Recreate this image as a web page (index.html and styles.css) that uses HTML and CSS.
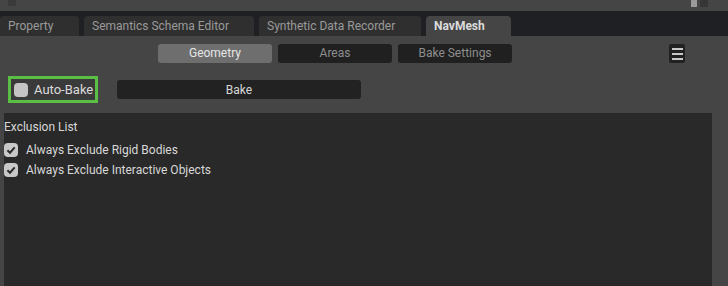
FILE: index.html
```html
<!DOCTYPE html>
<html>
<head>
    <title>NavMesh</title>
    <meta charset="utf-8">
    <link rel="stylesheet" href="styles.css">
</head>

<body>
    <div class="topbar">
        <div class="grip"></div>
        <div class="scroll">
            <div class="scroll-thumb"></div>
            <div class="scroll-track"></div>
        </div>
    </div>

    <div class="tabbar">
        <div class="tab tab-property">Property</div>
        <div class="tab tab-semantics">Semantics Schema Editor</div>
        <div class="tab tab-synthetic">Synthetic Data Recorder</div>
        <div class="tab tab-navmesh active">NavMesh</div>
    </div>

    <div class="panel">
        <div class="toolbar">
            <div class="segments">
                <div class="segment selected">Geometry</div>
                <div class="segment">Areas</div>
                <div class="segment">Bake Settings</div>
            </div>
            <div class="menu-btn">
                <span></span>
                <span></span>
                <span></span>
            </div>
        </div>

        <div class="bake-row">
            <label class="auto-bake">
                <span class="toggle"></span>
                Auto-Bake
            </label>
            <button class="bake-btn">Bake</button>
        </div>

        <div class="exclusion">
            <div class="exclusion-title">Exclusion List</div>
            <label class="check-row">
                <span class="check">
                    <svg width="10" height="10" viewBox="0 0 10 10"><path d="M1.4 5.2 L4 7.7 L8.7 2.3" fill="none" stroke="#2a2a2a" stroke-width="2"/></svg>
                </span>
                Always Exclude Rigid Bodies
            </label>
            <label class="check-row">
                <span class="check">
                    <svg width="10" height="10" viewBox="0 0 10 10"><path d="M1.4 5.2 L4 7.7 L8.7 2.3" fill="none" stroke="#2a2a2a" stroke-width="2"/></svg>
                </span>
                Always Exclude Interactive Objects
            </label>
        </div>
    </div>
</body>

</html>
```

FILE: styles.css
```css
html, body {
    height: 100%;
}

body {
    margin: 0;
    display: flex;
    flex-direction: column;
    font-family: Roboto, sans-serif;
    font-size: 12px;
    color: #d0d0d0;
    background-color: #454545;
    overflow: hidden;
}

.topbar {
    height: 11px;
    display: flex;
    justify-content: space-between;
    padding: 0 20px 0 8px;
    background-color: #454545;
}

.grip {
    width: 8px;
    height: 6px;
    background-color: #3a3a3a;
}

.scroll {
    display: flex;
    gap: 3px;
}

.scroll-thumb {
    width: 6px;
    height: 7px;
    background-color: #9a9a9a;
}

.scroll-track {
    width: 8px;
    height: 7px;
    background-color: #363636;
}

.tabbar {
    height: 20px;
    padding-top: 5px;
    display: flex;
    align-items: flex-end;
    gap: 5px;
    background-color: #1f2024;
}

.tab {
    height: 20px;
    line-height: 20px;
    padding-left: 8px;
    box-sizing: border-box;
    border-radius: 4px 4px 0 0;
    background-color: #2f2f2f;
    color: #9a9a9a;
    font-size: 12px;
}

.tab-property { width: 79px; }
.tab-semantics { width: 170px; }
.tab-synthetic { width: 162px; }
.tab-navmesh { width: 85px; }

.tab.active {
    background-color: #454545;
    color: #dcdcdc;
    font-weight: bold;
}

.panel {
    flex: 1;
    display: flex;
    flex-direction: column;
    background-color: #454545;
}

.toolbar {
    display: flex;
    align-items: center;
    padding: 8px 0 0 158px;
    height: 19px;
}

.segments {
    display: flex;
    gap: 6px;
}

.segment {
    width: 114px;
    height: 19px;
    line-height: 19px;
    text-align: center;
    border-radius: 3px;
    background-color: #202020;
    color: #8e8e8e;
}

.segment.selected {
    background-color: #6e6e6e;
    color: #e6e6e6;
}

.menu-btn {
    margin-left: 157px;
    width: 16px;
    height: 19px;
    border-radius: 2px;
    background-color: #212121;
    display: flex;
    flex-direction: column;
    justify-content: center;
    align-items: center;
    gap: 3px;
}

.menu-btn span {
    width: 11px;
    height: 2px;
    background-color: #c8c8c8;
}

.bake-row {
    display: flex;
    align-items: center;
    margin-top: 13px;
    padding-left: 8px;
}

.auto-bake {
    display: flex;
    align-items: center;
    gap: 6px;
    width: 81px;
    height: 21px;
    padding-left: 3px;
    border: 3px solid #5bbf45;
    background-color: #3a3a3a;
    color: #dadada;
    font-size: 13px;
}

.toggle {
    width: 14px;
    height: 14px;
    border-radius: 4px;
    background-color: #c4c4c4;
}

.bake-btn {
    margin-left: 19px;
    width: 244px;
    height: 19px;
    border: none;
    border-radius: 3px;
    padding: 0;
    background-color: #222222;
    color: #d8d8d8;
    font-family: Roboto, sans-serif;
    font-size: 12px;
}

.exclusion {
    flex: 1;
    margin: 10px 16px 0 4px;
    background-color: #292929;
    padding-top: 8px;
}

.exclusion-title {
    height: 13px;
    line-height: 13px;
    margin-bottom: 6px;
    color: #d8d8d8;
}

.check-row {
    display: flex;
    align-items: center;
    gap: 8px;
    height: 20px;
    color: #d8d8d8;
}

.check {
    width: 14px;
    height: 14px;
    border-radius: 4px;
    background-color: #c8c8c8;
    display: flex;
    align-items: center;
    justify-content: center;
}
```
